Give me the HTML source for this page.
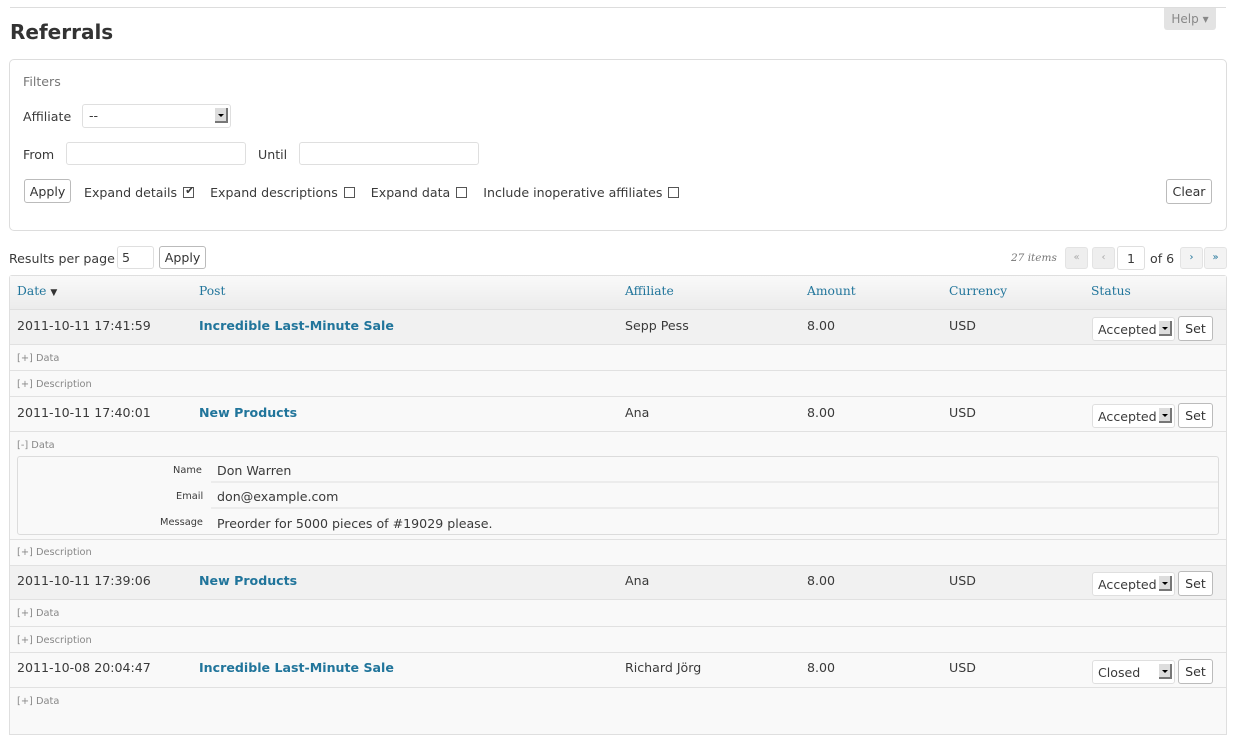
<!DOCTYPE html>
<html><head><meta charset="utf-8"><style>
*{box-sizing:border-box}
body{margin:0;width:1234px;height:710px;overflow:hidden;background:#fff;font-family:"DejaVu Sans","Liberation Sans",sans-serif;font-size:12.6px;color:#3a3a3a;position:relative}
.a{position:absolute;white-space:nowrap}
.t{margin-top:1px}
.inp{position:absolute;border:1px solid #dfdfdf;border-radius:3px;background:#fff}
.btn{position:absolute;border:1px solid #bbb;border-radius:3px;background:#fff;font-size:12.6px;text-align:center;color:#333}
.cb{display:inline-block;width:11px;height:11px;border:1px solid #555;vertical-align:-1px;margin-left:6px;background:#fff;position:relative}
.sel{position:absolute;border:1px solid #dfdfdf;border-radius:3px;background:#fff;font-size:12.6px;padding-left:6px}
.arr{position:absolute;right:2px;top:3px;width:13px;height:15px;background:#ddd;border-right:2px solid #777;border-bottom:2px solid #777}
.arr:after{content:"";position:absolute;left:3px;top:6px;border-left:3px solid transparent;border-right:3px solid transparent;border-top:3px solid #000}
.th{font-family:"DejaVu Serif","Liberation Serif",serif;color:#21759b;font-size:12.3px;top:284px}
.row{position:absolute;left:10px;width:1216px;border-bottom:1px solid #e1e1e1}
.sm{font-size:9.8px;color:#888}
.lnk{color:#21759b;font-weight:bold}
.pg{position:absolute;top:247px;width:23px;height:22px;border:1px solid #e3e3e3;border-radius:3px;background:#eee;font-size:10px;text-align:center;line-height:19px}
</style></head><body>
<div class="a" style="left:10px;top:7px;width:1216px;height:1px;background:#ddd"></div>
<div class="a" style="left:1164px;top:8px;width:52px;height:22px;background:#e3e3e3;color:#888;font-size:12px;text-align:center;line-height:22px;border-radius:0 0 3px 3px">Help ▾</div>
<div class="a" style="left:10px;top:20px;font-size:20px;font-weight:bold;color:#333">Referrals</div>

<div class="a" style="left:9px;top:59px;width:1218px;height:172px;border:1px solid #ddd;border-radius:5px"></div>
<div class="a" style="left:23px;top:74px;color:#777">Filters</div>
<div class="a" style="left:23px;top:109px">Affiliate</div>
<div class="sel" style="left:82px;top:104px;width:149px;height:24px;line-height:22px">--<div class="arr"></div></div>
<div class="a" style="left:23px;top:147px">From</div>
<div class="inp" style="left:66px;top:142px;width:180px;height:23px"></div>
<div class="a" style="left:258px;top:147px">Until</div>
<div class="inp" style="left:299px;top:142px;width:180px;height:23px"></div>
<div class="btn" style="left:24px;top:179px;width:47px;height:24px;line-height:23px">Apply</div>
<div class="a" style="left:84px;top:185px">Expand details<span class="cb"><span style="position:absolute;left:1px;top:-4px;font-size:11px">✔</span></span>&nbsp;&nbsp;&nbsp;&nbsp;Expand descriptions<span class="cb"></span>&nbsp;&nbsp;&nbsp;&nbsp;Expand data<span class="cb"></span>&nbsp;&nbsp;&nbsp;&nbsp;Include inoperative affiliates<span class="cb"></span></div>
<div class="btn" style="left:1166px;top:179px;width:46px;height:25px;line-height:24px">Clear</div>

<div class="a" style="left:9px;top:251px">Results per page</div>
<div class="inp" style="left:117px;top:246px;width:37px;height:23px;padding-left:4px;line-height:22px">5</div>
<div class="btn" style="left:159px;top:246px;width:47px;height:23px;line-height:22px">Apply</div>
<div class="a" style="left:1011px;top:252px;font-family:'DejaVu Serif',serif;font-style:italic;font-size:10.5px;color:#777">27 items</div>
<div class="pg" style="left:1065px;color:#aaa">«</div>
<div class="pg" style="left:1092px;color:#aaa">‹</div>
<div class="inp" style="left:1117px;top:246px;width:28px;height:24px;text-align:center;line-height:23px">1</div>
<div class="a" style="left:1150px;top:251px">of 6</div>
<div class="pg" style="left:1180px;color:#21759b;background:#f3f3f3">›</div>
<div class="pg" style="left:1204px;color:#21759b;background:#f3f3f3">»</div>

<div class="a" style="left:9px;top:275px;width:1218px;height:460px;border:1px solid #dfdfdf;border-radius:3px 3px 0 0;background:#f9f9f9"></div>
<div class="a" style="left:10px;top:276px;width:1216px;height:34px;background:linear-gradient(#f9f9f9,#ececec);border-bottom:1px solid #dfdfdf"></div>
<div class="a th" style="left:17px">Date <span style="font-size:9px;color:#333">▼</span></div>
<div class="a th" style="left:199px">Post</div>
<div class="a th" style="left:625px">Affiliate</div>
<div class="a th" style="left:807px">Amount</div>
<div class="a th" style="left:949px">Currency</div>
<div class="a th" style="left:1091px">Status</div>

<div class="row" style="top:310px;height:35px;background:#f1f1f1"></div>
<div class="row" style="top:345px;height:26px"></div>
<div class="row" style="top:371px;height:26px"></div>
<div class="row" style="top:397px;height:35px;background:#f9f9f9"></div>
<div class="row" style="top:432px;height:107px;border-bottom:none"></div>
<div class="a" style="left:17px;top:456px;width:1202px;height:79px;border:1px solid #dcdcdc;border-radius:3px;background:#f9f9f9"></div>
<div class="a" style="left:211px;top:457px;width:1007px;height:26px;border-bottom:2px solid #ececec"></div>
<div class="a" style="left:211px;top:483px;width:1007px;height:26px;border-bottom:2px solid #ececec"></div>
<div class="row" style="top:539px;height:27px;border-top:1px solid #e1e1e1"></div>
<div class="row" style="top:566px;height:34px;background:#f1f1f1"></div>
<div class="row" style="top:600px;height:27px"></div>
<div class="row" style="top:627px;height:26px"></div>
<div class="row" style="top:653px;height:35px;background:#f9f9f9"></div>

<div class="a t" style="left:17px;top:317px">2011-10-11 17:41:59</div>
<div class="a lnk t" style="left:199px;top:317px">Incredible Last-Minute Sale</div>
<div class="a t" style="left:625px;top:317px">Sepp Pess</div>
<div class="a t" style="left:807px;top:317px">8.00</div>
<div class="a t" style="left:949px;top:317px">USD</div>
<div class="a sm t" style="left:17px;top:352px">[+] Data</div>
<div class="a sm t" style="left:17px;top:378px">[+] Description</div>

<div class="a t" style="left:17px;top:404px">2011-10-11 17:40:01</div>
<div class="a lnk t" style="left:199px;top:404px">New Products</div>
<div class="a t" style="left:625px;top:404px">Ana</div>
<div class="a t" style="left:807px;top:404px">8.00</div>
<div class="a t" style="left:949px;top:404px">USD</div>
<div class="a sm t" style="left:17px;top:439px">[-] Data</div>
<div class="a t" style="left:173px;top:464px;font-size:9.8px">Name</div>
<div class="a t" style="left:217px;top:462px">Don Warren</div>
<div class="a t" style="left:176px;top:490px;font-size:9.8px">Email</div>
<div class="a t" style="left:217px;top:488px">don@example.com</div>
<div class="a t" style="left:160px;top:516px;font-size:9.8px">Message</div>
<div class="a t" style="left:217px;top:515px">Preorder for 5000 pieces of #19029 please.</div>
<div class="a sm t" style="left:17px;top:546px">[+] Description</div>

<div class="a t" style="left:17px;top:572px">2011-10-11 17:39:06</div>
<div class="a lnk t" style="left:199px;top:572px">New Products</div>
<div class="a t" style="left:625px;top:572px">Ana</div>
<div class="a t" style="left:807px;top:572px">8.00</div>
<div class="a t" style="left:949px;top:572px">USD</div>
<div class="a sm t" style="left:17px;top:607px">[+] Data</div>
<div class="a sm t" style="left:17px;top:634px">[+] Description</div>

<div class="a t" style="left:17px;top:659px">2011-10-08 20:04:47</div>
<div class="a lnk t" style="left:199px;top:659px">Incredible Last-Minute Sale</div>
<div class="a t" style="left:625px;top:659px">Richard Jörg</div>
<div class="a t" style="left:807px;top:659px">8.00</div>
<div class="a t" style="left:949px;top:659px">USD</div>
<div class="a sm t" style="left:17px;top:695px">[+] Data</div>

<div class="sel" style="left:1092px;top:317px;width:83px;height:24px;line-height:23px;padding-left:5px">Accepted<div class="arr"></div></div>
<div class="btn" style="left:1178px;top:316px;width:35px;height:25px;line-height:24px">Set</div>
<div class="sel" style="left:1092px;top:404px;width:83px;height:24px;line-height:23px;padding-left:5px">Accepted<div class="arr"></div></div>
<div class="btn" style="left:1178px;top:403px;width:35px;height:25px;line-height:24px">Set</div>
<div class="sel" style="left:1092px;top:572px;width:83px;height:24px;line-height:23px;padding-left:5px">Accepted<div class="arr"></div></div>
<div class="btn" style="left:1178px;top:571px;width:35px;height:25px;line-height:24px">Set</div>
<div class="sel" style="left:1092px;top:660px;width:83px;height:24px;line-height:23px;padding-left:5px">Closed<div class="arr"></div></div>
<div class="btn" style="left:1178px;top:659px;width:35px;height:25px;line-height:24px">Set</div>
</body></html>
